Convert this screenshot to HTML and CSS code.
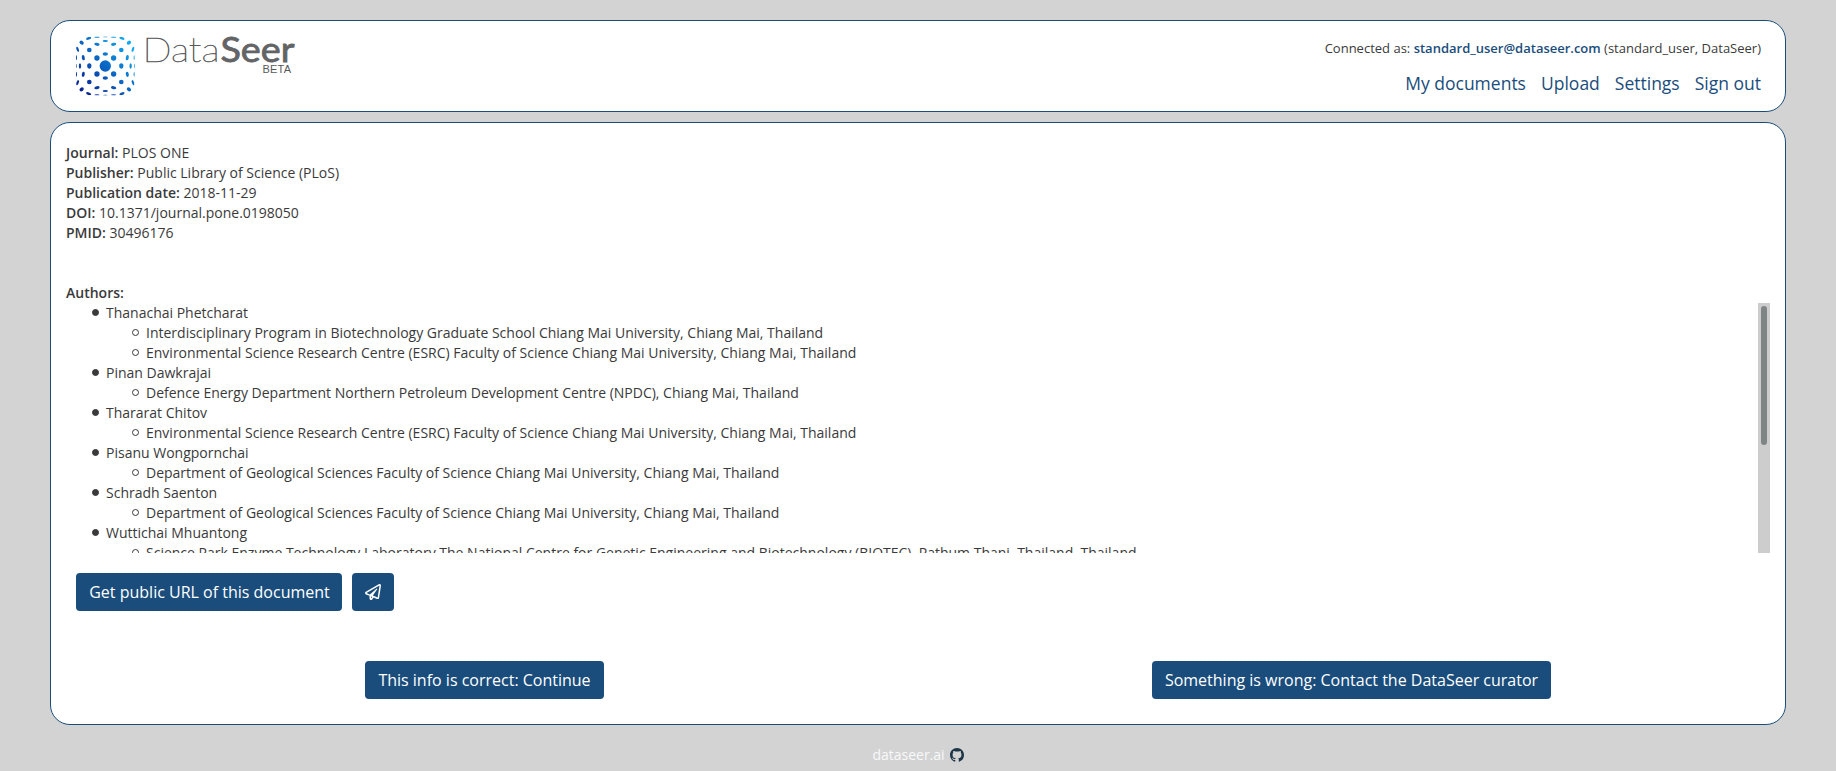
FILE: index.html
```html
<!DOCTYPE html>
<html lang="en">
<head>
<meta charset="utf-8">
<title>DataSeer</title>
<link rel="stylesheet" href="styles.css">
</head>
<body>
<header class="panel header">
  <svg class="logo" width="222" height="62" viewBox="0 0 222 62" role="img" aria-label="DataSeer beta">
    <defs>
      <linearGradient id="dots" gradientUnits="userSpaceOnUse" x1="-80" y1="80" x2="80" y2="-80">
        <stop offset="0" stop-color="#0a1a8c"/><stop offset=".5" stop-color="#0a66c4"/><stop offset="1" stop-color="#12b4f5"/>
      </linearGradient>
      <mask id="shape" maskUnits="userSpaceOnUse" x="-90" y="-90" width="180" height="180">
        <g fill="#fff">
          <circle r="17"/>
          <ellipse cx="-48" rx="6.500" ry="8"/><ellipse cx="48" rx="6.500" ry="8"/>
          <ellipse cx="-76" rx="3.500" ry="8"/><ellipse cx="76" rx="3.500" ry="8"/>
          <ellipse cx="-88" rx="2" ry="7"/><ellipse cx="88" rx="2" ry="7"/>
          <g id="top">
            <ellipse cy="-36" rx="8" ry="5.500"/>
            <circle cx="-25" cy="-24" r="8"/><circle cx="25" cy="-24" r="8"/>
            <circle cx="-48" cy="-48" r="7"/><circle cx="48" cy="-48" r="7"/>
            <ellipse rx="8" ry="4.500" transform="translate(-25 -65) rotate(10)"/>
            <ellipse rx="8" ry="4.500" transform="translate(25 -65) rotate(-10)"/>
            <ellipse cy="-75" rx="8" ry="3"/>
            <ellipse rx="4.500" ry="8" transform="translate(-66 -25) rotate(-10)"/>
            <ellipse rx="4.500" ry="8" transform="translate(66 -25) rotate(10)"/>
            <ellipse rx="7" ry="5.500" transform="translate(-71 -70) rotate(40)"/>
            <ellipse rx="7" ry="5.500" transform="translate(71 -70) rotate(-40)"/>
            <ellipse rx="8" ry="4" transform="translate(-50 -83) rotate(-20)"/>
            <ellipse rx="8" ry="4" transform="translate(50 -83) rotate(20)"/>
            <ellipse cx="-25" cy="-87" rx="8" ry="2.500"/><ellipse cx="25" cy="-87" rx="8" ry="2.500"/>
            <ellipse cy="-88" rx="7" ry="2"/>
            <ellipse rx="3.500" ry="8" transform="translate(-83 -50) rotate(-20)"/>
            <ellipse rx="3.500" ry="8" transform="translate(83 -50) rotate(20)"/>
            <ellipse cx="-87" cy="-25" rx="2" ry="7"/><ellipse cx="87" cy="-25" rx="2" ry="7"/>
          </g>
          <use href="#top" transform="scale(1 -1)"/>
        </g>
      </mask>
    </defs>
    <g transform="translate(30.3 30) scale(.3333)">
      <rect x="-88" y="-88" width="176" height="176" fill="url(#dots)" mask="url(#shape)"/>
    </g>
    <text class="logo-light" x="67.500" y="25.500" textLength="77" lengthAdjust="spacingAndGlyphs">Data</text>
    <text class="logo-bold" x="145.500" y="25.500" textLength="74" lengthAdjust="spacingAndGlyphs">Seer</text>
    <text class="logo-beta" x="187.500" y="37" textLength="28.500">BETA</text>
  </svg>
  <div class="account">
    <div class="connected">Connected as: <a class="user" href="#">standard_user@dataseer.com</a> (standard_user, DataSeer)</div>
    <nav class="nav"><a href="#">My documents</a><a href="#">Upload</a><a href="#">Settings</a><a href="#">Sign out</a></nav>
  </div>
</header>
<main class="panel main">
  <section class="meta">
    <div><b>Journal:</b> PLOS ONE</div>
    <div><b>Publisher:</b> Public Library of Science (PLoS)</div>
    <div><b>Publication date:</b> 2018-11-29</div>
    <div><b>DOI:</b> 10.1371/journal.pone.0198050</div>
    <div><b>PMID:</b> 30496176</div>
  </section>
  <div class="authors-title"><b>Authors:</b></div>
  <div class="authors">
    <ul class="list">
      <li>Thanachai Phetcharat
        <ul><li>Interdisciplinary Program in Biotechnology Graduate School Chiang Mai University, Chiang Mai, Thailand</li>
        <li>Environmental Science Research Centre (ESRC) Faculty of Science Chiang Mai University, Chiang Mai, Thailand</li></ul></li>
      <li>Pinan Dawkrajai
        <ul><li>Defence Energy Department Northern Petroleum Development Centre (NPDC), Chiang Mai, Thailand</li></ul></li>
      <li>Thararat Chitov
        <ul><li>Environmental Science Research Centre (ESRC) Faculty of Science Chiang Mai University, Chiang Mai, Thailand</li></ul></li>
      <li>Pisanu Wongpornchai
        <ul><li>Department of Geological Sciences Faculty of Science Chiang Mai University, Chiang Mai, Thailand</li></ul></li>
      <li>Schradh Saenton
        <ul><li>Department of Geological Sciences Faculty of Science Chiang Mai University, Chiang Mai, Thailand</li></ul></li>
      <li>Wuttichai Mhuantong
        <ul><li>Science Park Enzyme Technology Laboratory The National Centre for Genetic Engineering and Biotechnology (BIOTEC), Pathum Thani, Thailand, Thailand</li></ul></li>
    </ul>
    <div class="track"><div class="thumb"></div></div>
  </div>
  <div class="share">
    <button class="btn btn-url">Get public URL of this document</button>
    <button class="btn" aria-label="Send"><svg class="plane" width="16" height="16" viewBox="0 0 512 512"><path fill="currentColor" d="M440 6.500L24 246.400c-34.400 19.900-31.100 70.800 5.700 85.900L144 379.600V464c0 46.400 59.200 65.500 86.600 28.600l43.800-59.100 111.900 46.200c5.900 2.400 12.100 3.600 18.300 3.600 8.200 0 16.300-2.100 23.600-6.200 12.800-7.200 21.600-20 23.900-34.500l59.400-387.200c6.100-40.100-36.900-68.800-71.500-48.900zM192 464v-64.600l36.600 15.100L192 464zm212.600-28.700l-153.800-63.500L391 169.500c10.700-15.500-9.500-33.500-23.700-21.200L155.800 332.600 48 288 464 48l-59.400 387.300z"/></svg></button>
  </div>
  <div class="actions">
    <div><button class="btn">This info is correct: Continue</button></div>
    <div><button class="btn">Something is wrong: Contact the DataSeer curator</button></div>
  </div>
</main>
<footer class="footer"><a href="#">dataseer.ai</a>
  <svg width="14" height="14" viewBox="0 0 16 16"><path fill="#1d3547" d="M8 0C3.580 0 0 3.580 0 8c0 3.540 2.290 6.530 5.470 7.590.4.070.55-.17.55-.38 0-.19-.01-.82-.01-1.490-2.010.37-2.530-.49-2.690-.94-.09-.23-.48-.94-.82-1.130-.28-.15-.68-.52-.01-.53.63-.01 1.080.58 1.230.82.72 1.210 1.870.87 2.330.66.07-.52.28-.87.51-1.070-1.780-.2-3.640-.89-3.640-3.950 0-.87.31-1.590.82-2.150-.08-.2-.36-1.020.08-2.120 0 0 .67-.21 2.200.82.64-.18 1.320-.27 2-.27s1.360.09 2 .27c1.530-1.040 2.200-.82 2.200-.82.44 1.100.16 1.920.08 2.120.51.56.82 1.270.82 2.150 0 3.070-1.870 3.750-3.650 3.950.29.25.54.73.54 1.480 0 1.070-.01 1.930-.01 2.200 0 .21.15.46.55.38A8.010 8.010 0 0 0 16 8c0-4.420-3.580-8-8-8z"/></svg>
</footer>
</body>
</html>
```

FILE: styles.css
```css
*, *::before { box-sizing: border-box; }
body {
  margin: 0;
  height: 771px;
  padding: 20px 50px 0;
  background: #d3d3d3;
  color: #3a3a3a;
  font: 14px/20px "Open Sans", sans-serif;
  overflow: hidden;
}
a { color: #1a4d7c; text-decoration: none; }
b { font-weight: 600; }
.panel { background: #fff; border: 1px solid #1a4d7c; border-radius: 20px; }
.header {
  height: 92px;
  padding: 15px 24px 0 24px;
  display: flex;
  justify-content: space-between;
}
.logo { display: block; overflow: visible; }
.logo-light { font: 100 34px Lato, sans-serif; fill: #58595b; stroke: #58595b; stroke-width: .6px; }
.logo-bold { font: 400 34px Lato, sans-serif; fill: #636466; stroke: #636466; stroke-width: .8px; }
.logo-beta { font: 11px "Liberation Sans", sans-serif; fill: #58595b; }
.account { text-align: right; }
.connected { font-size: 13px; margin-top: 2px; }
.user { font-weight: 600; }
.nav {
  display: flex;
  justify-content: flex-end;
  gap: 15px;
  margin-top: 11px;
  font-size: 17.5px;
  line-height: 28px;
}
.main { height: 603px; margin-top: 10px; padding-top: 20px; }
.meta { padding-left: 15px; }
.authors-title { padding-left: 15px; margin-top: 40px; }
.authors {
  display: flex;
  justify-content: space-between;
  height: 250px;
  margin: 0 15px;
  overflow: hidden;
}
.list { margin: 0; padding-left: 40px; list-style: none; }
.list ul { margin: 0; padding-left: 40px; list-style: none; }
.list li::before {
  content: "";
  display: inline-block;
  width: 7px;
  height: 7px;
  margin: 0 7px 0 -14px;
  border: 1px solid #3a3a3a;
  border-radius: 50%;
  vertical-align: 2px;
}
.list > li::before { background: #3a3a3a; }
.track { width: 12px; height: 250px; padding: 3px; background: #cdcdcd; }
.thumb { height: 139px; border-radius: 3px; background: #7f8484; }
.share { display: flex; gap: 10px; padding: 20px 25px 0; }
.btn {
  height: 38px;
  padding: 0 13px;
  border: 0;
  border-radius: 4px;
  background: #1a4d7c;
  color: #fff;
  font: 16px/24px "Open Sans", sans-serif;
}
.btn-url { width: 266px; padding-right: 12px; white-space: nowrap; }
.plane { display: block; }
.actions { display: grid; grid-template-columns: 1fr 1fr; margin-top: 50px; text-align: center; }
.footer {
  display: flex;
  justify-content: center;
  align-items: center;
  gap: 5px;
  margin-top: 20px;
}
.footer a { color: #f8f9fa; }
```
